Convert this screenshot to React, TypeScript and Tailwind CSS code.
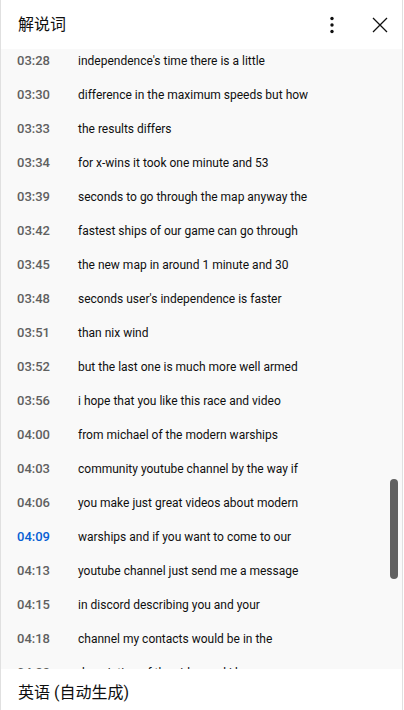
import React from "react";

const rows: [string, string][] = [
  ["03:28", "independence's time there is a little"],
  ["03:30", "difference in the maximum speeds but how"],
  ["03:33", "the results differs"],
  ["03:34", "for x-wins it took one minute and 53"],
  ["03:39", "seconds to go through the map anyway the"],
  ["03:42", "fastest ships of our game can go through"],
  ["03:45", "the new map in around 1 minute and 30"],
  ["03:48", "seconds user's independence is faster"],
  ["03:51", "than nix wind"],
  ["03:52", "but the last one is much more well armed"],
  ["03:56", "i hope that you like this race and video"],
  ["04:00", "from michael of the modern warships"],
  ["04:03", "community youtube channel by the way if"],
  ["04:06", "you make just great videos about modern"],
  ["04:09", "warships and if you want to come to our"],
  ["04:13", "youtube channel just send me a message"],
  ["04:15", "in discord describing you and your"],
  ["04:18", "channel my contacts would be in the"],
  ["04:22", "description of the video and i hope you"],
];

export default function App() {
  return (
    <div
      className="w-[404px] h-[710px] bg-white overflow-hidden"
      style={{ fontFamily: 'Roboto, "Noto Sans CJK SC", sans-serif' }}
    >
      <div className="w-[403px] h-full flex flex-col border-x border-[#e0e0e0]">
        <div className="h-[49px] shrink-0 flex items-center pl-[17px] pr-[10px] bg-white">
          <div className="flex-1 text-[16px] text-[#0f0f0f]">解说词</div>
          <svg width="24" height="24" viewBox="0 0 24 24" className="mr-[24px]">
            <circle cx="12" cy="5.5" r="1.7" fill="#0f0f0f" />
            <circle cx="12" cy="12" r="1.7" fill="#0f0f0f" />
            <circle cx="12" cy="18.5" r="1.7" fill="#0f0f0f" />
          </svg>
          <svg width="24" height="24" viewBox="0 0 24 24">
            <path d="M5 5 L19 19 M19 5 L5 19" stroke="#0f0f0f" strokeWidth="1.3" fill="none" />
          </svg>
        </div>
        <div className="flex-1 relative overflow-hidden bg-[#f9f9f9]">
          <div className="-mt-[5px]">
            {rows.map(([t, s]) => (
              <div key={t} className="h-[34px] flex items-center">
                <div
                  className={`w-[77px] pl-[16px] shrink-0 text-[13px] font-medium ${
                    t === "04:09" ? "text-[#065fd4]" : "text-[#606060]"
                  }`}
                >
                  {t}
                </div>
                <div className="text-[12px] text-[#0f0f0f] whitespace-nowrap">{s}</div>
              </div>
            ))}
          </div>
          <div className="absolute right-[4px] top-[430px] w-[8px] h-[100px] rounded-full bg-[#616161]" />
        </div>
        <div className="h-[41px] shrink-0 bg-white pl-[17px] pt-[13px] text-[16px] text-[#0f0f0f] leading-[22px]">
          英语 (自动生成)
        </div>
      </div>
    </div>
  );
}
